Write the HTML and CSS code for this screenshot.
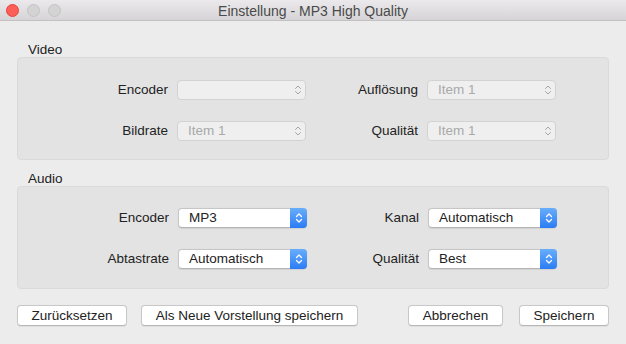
FILE: index.html
```html
<!DOCTYPE html>
<html lang="de">
<head>
    <meta charset="UTF-8">
    <title>Einstellung - MP3 High Quality</title>
    <link rel="stylesheet" href="styles.css">
</head>
<body>
    <div class="window">
        <!-- Title bar -->
        <div class="titlebar">
            <div class="lights">
                <span class="light red"></span>
                <span class="light"></span>
                <span class="light"></span>
            </div>
            <div class="title">Einstellung - MP3 High Quality</div>
        </div>

        <div class="content">
            <!-- Video section -->
            <div class="section-title">Video</div>
            <div class="group">
                <div class="form-grid">
                    <label class="field-label">Encoder</label>
                    <div class="popup disabled"><span class="value"></span>
                        <span class="arrows"><svg width="8" height="12" viewBox="0 0 8 12"><path d="M1.5 4.5 L4 2 L6.5 4.5 M1.5 7.5 L4 10 L6.5 7.5" /></svg></span>
                    </div>
                    <label class="field-label">Auflösung</label>
                    <div class="popup disabled"><span class="value">Item 1</span>
                        <span class="arrows"><svg width="8" height="12" viewBox="0 0 8 12"><path d="M1.5 4.5 L4 2 L6.5 4.5 M1.5 7.5 L4 10 L6.5 7.5" /></svg></span>
                    </div>

                    <label class="field-label">Bildrate</label>
                    <div class="popup disabled"><span class="value">Item 1</span>
                        <span class="arrows"><svg width="8" height="12" viewBox="0 0 8 12"><path d="M1.5 4.5 L4 2 L6.5 4.5 M1.5 7.5 L4 10 L6.5 7.5" /></svg></span>
                    </div>
                    <label class="field-label">Qualität</label>
                    <div class="popup disabled"><span class="value">Item 1</span>
                        <span class="arrows"><svg width="8" height="12" viewBox="0 0 8 12"><path d="M1.5 4.5 L4 2 L6.5 4.5 M1.5 7.5 L4 10 L6.5 7.5" /></svg></span>
                    </div>
                </div>
            </div>

            <!-- Audio section -->
            <div class="section-title audio-title">Audio</div>
            <div class="group">
                <div class="form-grid audio-grid">
                    <label class="field-label">Encoder</label>
                    <div class="popup"><span class="value">MP3</span>
                        <span class="arrows"><svg width="8" height="12" viewBox="0 0 8 12"><path d="M1.5 4.5 L4 2 L6.5 4.5 M1.5 7.5 L4 10 L6.5 7.5" /></svg></span>
                    </div>
                    <label class="field-label">Kanal</label>
                    <div class="popup"><span class="value">Automatisch</span>
                        <span class="arrows"><svg width="8" height="12" viewBox="0 0 8 12"><path d="M1.5 4.5 L4 2 L6.5 4.5 M1.5 7.5 L4 10 L6.5 7.5" /></svg></span>
                    </div>

                    <label class="field-label">Abtastrate</label>
                    <div class="popup"><span class="value">Automatisch</span>
                        <span class="arrows"><svg width="8" height="12" viewBox="0 0 8 12"><path d="M1.5 4.5 L4 2 L6.5 4.5 M1.5 7.5 L4 10 L6.5 7.5" /></svg></span>
                    </div>
                    <label class="field-label">Qualität</label>
                    <div class="popup"><span class="value">Best</span>
                        <span class="arrows"><svg width="8" height="12" viewBox="0 0 8 12"><path d="M1.5 4.5 L4 2 L6.5 4.5 M1.5 7.5 L4 10 L6.5 7.5" /></svg></span>
                    </div>
                </div>
            </div>

            <!-- Buttons -->
            <div class="button-row">
                <button class="btn btn-reset">Zurücksetzen</button>
                <button class="btn btn-preset">Als Neue Vorstellung speichern</button>
                <div class="spacer"></div>
                <button class="btn btn-cancel">Abbrechen</button>
                <button class="btn btn-save">Speichern</button>
            </div>
        </div>
    </div>
</body>
</html>
```

FILE: styles.css
```css
/* Page */
body {
    margin: 0;
    padding: 0;
    background: #ececec;
    font-family: 'Liberation Sans', Arial, sans-serif;
    font-size: 13.5px;
    color: #222;
}

.window {
    width: 626px;
    height: 344px;
    background: #ececec;
    overflow: hidden;
}

/* Title bar */
.titlebar {
    position: relative;
    height: 20px;
    background: linear-gradient(#ebe9eb, #d6d4d6);
    border-bottom: 1px solid #c2c0c2;
    display: flex;
    align-items: center;
    justify-content: center;
}

.lights {
    position: absolute;
    left: 6px;
    top: 4px;
    display: flex;
    gap: 8px;
}

.light {
    width: 11px;
    height: 11px;
    border-radius: 50%;
    background: #d3d3d3;
    border: 0.5px solid #c4c4c4;
}

.light.red {
    background: #fc5f57;
    border-color: #e2463f;
}

.title {
    font-size: 14px;
    color: #4a4a4a;
    padding-top: 1px;
}

/* Content */
.content {
    padding: 22px 17px 0 17px;
}

.section-title {
    height: 14px;
    line-height: 14px;
    padding-left: 11px;
    color: #222;
}

.audio-title {
    margin-top: 12px;
}

.group {
    background: #e3e3e3;
    border: 1px solid #dadada;
    border-radius: 4px;
    height: 101px;
    box-sizing: content-box;
}

.form-grid {
    display: grid;
    grid-template-columns: 150px 129px 103px 129px;
    grid-auto-rows: 20px;
    column-gap: 9px;
    row-gap: 21px;
    padding-top: 22px;
}

.audio-grid {
    padding-top: 21px;
    padding-left: 1px;
}

.field-label {
    text-align: right;
    line-height: 20px;
    color: #222;
}

/* Popup buttons */
.popup {
    position: relative;
    height: 20px;
    box-sizing: border-box;
    background: #fff;
    border: 1px solid #c6c6c6;
    border-bottom-color: #b4b4b4;
    border-radius: 4px;
    box-shadow: 0 0.5px 1px rgba(0, 0, 0, 0.08);
    display: flex;
    align-items: center;
}

.popup .value {
    flex: 1;
    padding-left: 10px;
    line-height: 18px;
    color: #222;
}

.popup .arrows {
    width: 17px;
    height: 20px;
    margin: -1px -1px -1px 0;
    border-radius: 0 4px 4px 0;
    background: linear-gradient(#69aefb, #2b7cf4);
    display: flex;
    align-items: center;
    justify-content: center;
}

.popup .arrows path {
    fill: none;
    stroke: #fff;
    stroke-width: 1.3;
    stroke-linecap: round;
    stroke-linejoin: round;
}

.popup.disabled {
    background: #efefef;
    border-color: #d2d2d2;
    box-shadow: none;
}

.popup.disabled .value {
    color: #a9a9a9;
}

.popup.disabled .arrows {
    background: none;
}

.popup.disabled .arrows path {
    stroke: #a5a5a5;
    stroke-width: 1;
}

/* Buttons */
.button-row {
    display: flex;
    align-items: center;
    margin-top: 16px;
}

.btn {
    height: 21px;
    padding: 0;
    font-family: 'Liberation Sans', Arial, sans-serif;
    font-size: 13.5px;
    color: #222;
    background: #fff;
    border: 1px solid #c8c8c8;
    border-bottom-color: #b6b6b6;
    border-radius: 4px;
    box-shadow: 0 0.5px 1px rgba(0, 0, 0, 0.06);
}

.btn-reset { width: 110px; }
.btn-preset { width: 217px; margin-left: 14px; }
.btn-cancel { width: 95px; }
.btn-save { width: 90px; margin-left: 16px; }

.spacer {
    flex: 1;
}
```
